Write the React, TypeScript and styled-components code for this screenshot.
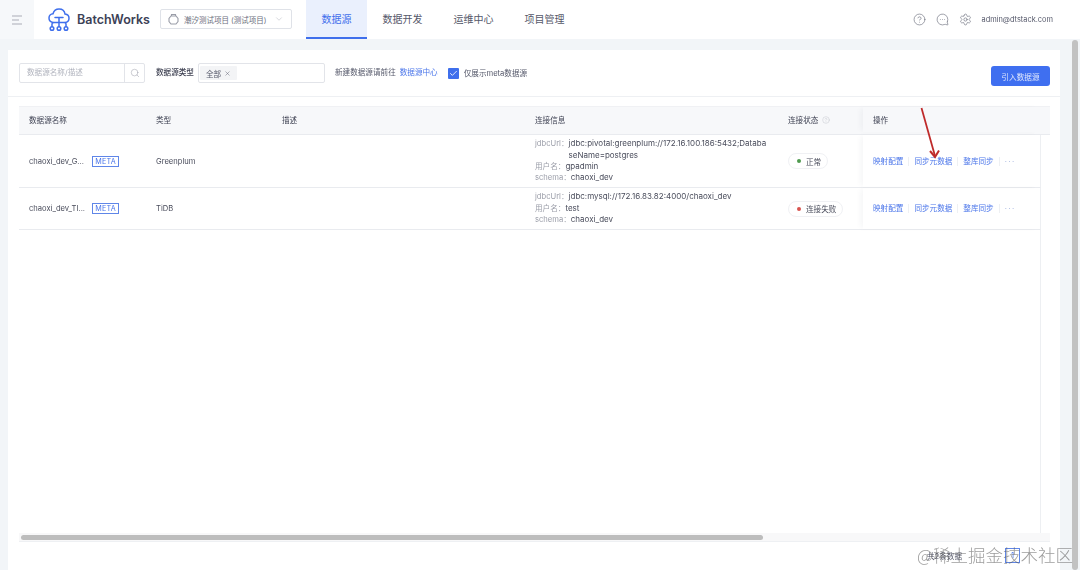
import { createGlobalStyle, styled } from 'styled-components'
import { ChevronDown, Search, Check, X, CircleHelp, MessageCircleMore, Settings } from 'lucide-react'

const GlobalStyle = createGlobalStyle`
  html, body {
    margin: 0;
    padding: 0;
    width: 1080px;
    height: 570px;
    overflow: hidden;
    background: #f2f5f8;
    font-family: Inter, "Noto Sans CJK SC", sans-serif;
    font-size: 7.6px;
    color: #4a4d5c;
  }
  * { box-sizing: border-box; }
`

const Page = styled.div`
  position: relative;
  width: 1080px;
  height: 570px;
  display: flex;
  flex-direction: column;
  filter: blur(0.35px);
`

const Header = styled.header`
  height: 39px;
  flex: none;
  display: flex;
  align-items: stretch;
  background: #fff;
`

const Collapse = styled.div`
  width: 34px;
  display: flex;
  align-items: center;
  justify-content: center;
  background: #f6f8fa;
`

const Brand = styled.div`
  display: flex;
  align-items: center;
  gap: 7px;
  margin-left: 14px;
  width: 112px;
  font-size: 12.5px;
  font-weight: 600;
  color: #3c4156;
`

const ProjectSelect = styled.div`
  width: 132px;
  height: 20px;
  margin-top: 9px;
  padding: 0 7px;
  display: flex;
  align-items: center;
  gap: 5px;
  border: 1px solid #dfe2e8;
  border-radius: 2px;
  font-size: 7.5px;
  color: #6b6e7c;
  & > span { flex: 1; white-space: nowrap; }
`

const Nav = styled.nav`
  display: flex;
  margin-left: 14px;
  flex: 1;
`

const NavItem = styled.div<{ $active?: boolean }>`
  width: ${p => (p.$active ? '61px' : '71px')};
  display: flex;
  align-items: center;
  justify-content: center;
  font-size: 10px;
  color: ${p => (p.$active ? '#3f6fec' : '#55586a')};
  background: ${p => (p.$active ? '#eaf0fd' : 'transparent')};
  border-bottom: 2px solid ${p => (p.$active ? '#3f6fec' : 'transparent')};
`

const UserArea = styled.div`
  display: flex;
  align-items: center;
  gap: 10px;
  padding-right: 27px;
  color: #6c6f7d;
`

const MessageIcon = styled(MessageCircleMore)`
  transform: scaleX(-1);
`

const UserMail = styled.span`
  font-size: 7.4px;
  color: #55586a;
`

const Card = styled.main`
  flex: 1;
  margin: 11px 20px 0 8px;
  background: #fff;
  display: flex;
  flex-direction: column;
  min-height: 0;
`

const FilterBar = styled.div`
  height: 47px;
  flex: none;
  padding: 13px 10px 0 11px;
  display: flex;
  align-items: flex-start;
  border-bottom: 1px solid #eef0f3;
`

const SearchBox = styled.div`
  width: 126px;
  height: 20px;
  display: flex;
  border: 1px solid #e2e4e9;
  border-radius: 2px;
  color: #b0b3bd;
  & > span { flex: 1; padding-left: 7px; line-height: 18px; white-space: nowrap; }
`

const SearchIcon = styled.div`
  width: 20px;
  display: flex;
  align-items: center;
  justify-content: center;
  border-left: 1px solid #e2e4e9;
  color: #9a9da8;
`

const FilterLabel = styled.span`
  margin-left: 11px;
  width: 42px;
  line-height: 20px;
  font-weight: 500;
  color: #3e4152;
  white-space: nowrap;
`

const TypeSelect = styled.div`
  width: 127px;
  height: 20px;
  padding: 2px 1px;
  border: 1px solid #e2e4e9;
  border-radius: 2px;
`

const TypeTag = styled.span`
  height: 14px;
  width: 37px;
  display: flex;
  align-items: center;
  justify-content: center;
  gap: 3px;
  background: #f3f4f6;
  border-radius: 1px;
  color: #55586a;
`

const Hint = styled.span`
  margin-left: 10px;
  line-height: 20px;
  color: #55586a;
  white-space: nowrap;
`

const BlueLink = styled.a`
  color: #4a75ea;
  white-space: nowrap;
`

const HintLink = styled(BlueLink)`
  margin-left: 4px;
  line-height: 20px;
`

const CheckItem = styled.label`
  margin: 5px 0 0 10px;
  display: flex;
  align-items: center;
  gap: 5px;
  color: #55586a;
  white-space: nowrap;
  line-height: 11px;
`

const CheckMark = styled.span`
  width: 11px;
  height: 11px;
  display: flex;
  align-items: center;
  justify-content: center;
  background: #3f6fec;
  border-radius: 1px;
  color: #fff;
`

const ImportButton = styled.button`
  margin: 3px 0 0 auto;
  width: 59px;
  height: 20px;
  padding: 0;
  border: 0;
  border-radius: 3px;
  background: #3f6ff0;
  color: #dfe7fd;
  font: inherit;
`

const TableWrap = styled.section`
  flex: 1;
  margin: 9px 10px 0 11px;
  min-height: 0;
  display: flex;
  flex-direction: column;
`

const TableBody = styled.div`
  flex: 1;
  min-height: 0;
  display: flex;
  flex-direction: column;
`

const columns = '127px 126px 253px 253px 85px 177px'

const HeadRow = styled.div`
  height: 29px;
  flex: none;
  padding-bottom: 2px;
  display: grid;
  grid-template-columns: ${columns};
  align-items: center;
  background: #f7f8fa;
  border-top: 1px solid #f0f1f4;
  border-bottom: 1px solid #e9ebef;
  color: #3e4152;
`

const Row = styled.div<{ $height: number }>`
  height: ${p => p.$height}px;
  width: 1022px;
  flex: none;
  display: grid;
  grid-template-columns: ${columns};
  align-items: center;
  border-bottom: 1px solid #e9ebef;
  border-right: 1px solid #edeff2;
`

const Cell = styled.div`
  padding-left: 10px;
  display: flex;
  align-items: center;
  white-space: nowrap;
`

const HeadHelp = styled(CircleHelp)`
  margin-left: 4px;
  color: #b0b3bd;
`

const FixedCell = styled(Cell)`
  height: 100%;
  box-shadow: -4px 0 6px -2px rgba(40, 50, 80, 0.05);
`

const NameText = styled.span`
  width: 63px;
  overflow: hidden;
`

const MetaTag = styled.span`
  width: 27px;
  height: 11px;
  display: flex;
  align-items: center;
  justify-content: center;
  border: 1px solid #5f86e8;
  color: #4a75ea;
  font-size: 7.2px;
  letter-spacing: 0.2px;
`

const Connection = styled.div`
  padding-left: 10px;
  font-size: 8px;
  line-height: 11.4px;
`

const ConnLine = styled.div`
  display: flex;
  white-space: nowrap;
`

const ConnKey = styled.span`
  font-size: 7.6px;
  color: #9a9da8;
`

const ConnValue = styled.span`
  color: #4a4d5c;
  white-space: pre-line;
`

const StatusPill = styled.span`
  height: 16px;
  padding: 0 6px 0 8px;
  display: inline-flex;
  align-items: center;
  gap: 5px;
  border: 1px solid #f0f1f4;
  border-radius: 8px;
`

const Dot = styled.i<{ $color: string }>`
  width: 4px;
  height: 4px;
  border-radius: 50%;
  background: ${p => p.$color};
`

const Action = styled(BlueLink)`
  padding-right: 5px;
  margin-right: 5px;
  border-right: 1px solid #eef0f3;
  line-height: 9px;
`

const More = styled.span`
  color: #8fa3d8;
  letter-spacing: 1.5px;
  line-height: 9px;
`

const Filler = styled.div`
  flex: 1;
  width: 1022px;
  border-right: 1px solid #edeff2;
`

const HScrollTrack = styled.div`
  height: 9px;
  flex: none;
  padding: 2px;
  background: #f8f8f9;
  border-bottom: 1px solid #eef0f3;
`

const HScrollThumb = styled.div`
  width: 742px;
  height: 5px;
  border-radius: 3px;
  background: #bdbdbd;
`

const Footer = styled.div`
  height: 28px;
  flex: none;
  display: flex;
  justify-content: flex-end;
  align-items: center;
  padding: 0 30px 2px 0;
  gap: 43px;
  color: #55586a;
`

const PageBox = styled.span`
  width: 15px;
  height: 15px;
  display: flex;
  align-items: center;
  justify-content: center;
  border: 1px solid #5f86e8;
  color: #4a75ea;
`

const PageScrollbar = styled.div`
  position: absolute;
  top: 40px;
  right: 2px;
  width: 6px;
  height: 530px;
  border-radius: 3px;
  background: #c2c2c2;
`

const Watermark = styled.div`
  position: absolute;
  right: 7px;
  bottom: 5px;
  font-family: "Noto Sans CJK SC", sans-serif;
  font-size: 17.5px;
  font-weight: 300;
  line-height: 20px;
  color: rgba(90, 90, 90, 0.6);
  white-space: nowrap;
`

const Arrow = styled.svg`
  position: absolute;
  left: 916px;
  top: 105px;
`

function Logo() {
  return (
    <svg width="22" height="24" viewBox="0 0 22 24" fill="none" stroke="#3f6fec" strokeWidth="1.5" strokeLinecap="round">
      <path d="M5 14.500C2.500 14 1 12.200 1 10c0-2.400 1.800-4.200 4-4.300C5.800 3 8 1 11 1c3.200 0 5.600 2.200 6 5 2.300.3 4 2 4 4.200 0 2.300-1.700 4-4 4.300" />
      <path d="M7 9.500h8M11 9.500v9M11 14.500H5.500c-.8 0-1.500.7-1.500 1.500v2.500M11 14.500h5.500c.8 0 1.500.7 1.500 1.500v2.500" />
      <circle cx="4" cy="20.500" r="1.800" />
      <circle cx="11" cy="20.500" r="1.800" />
      <circle cx="18" cy="20.500" r="1.800" />
    </svg>
  )
}

function MenuIcon() {
  return (
    <svg width="12" height="10" viewBox="0 0 12 10" fill="none" stroke="#a9acb5" strokeWidth="1.200">
      <path d="M1 1h10M1 5h7M1 9h10" />
    </svg>
  )
}

function ProjectIcon() {
  return (
    <svg width="11" height="12" viewBox="0 0 11 12" fill="none" stroke="#9a9da8" strokeWidth="1.100">
      <path d="M3.500 3V1.500h4V3" />
      <path d="M3 3h5l2 2.500v3L8 11H3L1 8.500v-3z" />
    </svg>
  )
}

function Connect(props: { url: string; user: string }) {
  return (
    <Connection>
      <ConnLine>
        <ConnKey>jdbcUrl：</ConnKey>
        <ConnValue>{props.url}</ConnValue>
      </ConnLine>
      <ConnLine>
        <ConnKey>用户名：</ConnKey>
        <ConnValue>{props.user}</ConnValue>
      </ConnLine>
      <ConnLine>
        <ConnKey>schema：</ConnKey>
        <ConnValue>chaoxi_dev</ConnValue>
      </ConnLine>
    </Connection>
  )
}

function Actions() {
  return (
    <>
      <Action>映射配置</Action>
      <Action>同步元数据</Action>
      <Action>整库同步</Action>
      <More>···</More>
    </>
  )
}

export default function App() {
  return (
    <Page>
      <GlobalStyle />
      <Header>
        <Collapse>
          <MenuIcon />
        </Collapse>
        <Brand>
          <Logo />
          BatchWorks
        </Brand>
        <ProjectSelect>
          <ProjectIcon />
          <span>潮汐测试项目 (测试项目)</span>
          <ChevronDown size={10} strokeWidth={1.2} color="#b0b3bd" />
        </ProjectSelect>
        <Nav>
          <NavItem $active>数据源</NavItem>
          <NavItem>数据开发</NavItem>
          <NavItem>运维中心</NavItem>
          <NavItem>项目管理</NavItem>
        </Nav>
        <UserArea>
          <CircleHelp size={13} strokeWidth={1.2} />
          <MessageIcon size={13} strokeWidth={1.2} />
          <Settings size={13} strokeWidth={1.2} />
          <UserMail>admin@dtstack.com</UserMail>
        </UserArea>
      </Header>
      <Card>
        <FilterBar>
          <SearchBox>
            <span>数据源名称/描述</span>
            <SearchIcon>
              <Search size={10} strokeWidth={1.2} />
            </SearchIcon>
          </SearchBox>
          <FilterLabel>数据源类型</FilterLabel>
          <TypeSelect>
            <TypeTag>
              全部
              <X size={7} strokeWidth={1.5} />
            </TypeTag>
          </TypeSelect>
          <Hint>新建数据源请前往</Hint>
          <HintLink>数据源中心</HintLink>
          <CheckItem>
            <CheckMark>
              <Check size={9} strokeWidth={2.2} />
            </CheckMark>
            仅展示meta数据源
          </CheckItem>
          <ImportButton>引入数据源</ImportButton>
        </FilterBar>
        <TableWrap>
          <TableBody>
            <HeadRow>
              <Cell>数据源名称</Cell>
              <Cell>类型</Cell>
              <Cell>描述</Cell>
              <Cell>连接信息</Cell>
              <Cell>
                连接状态
                <HeadHelp size={8} strokeWidth={1} />
              </Cell>
              <FixedCell>操作</FixedCell>
            </HeadRow>
            <Row $height={53}>
              <Cell>
                <NameText>chaoxi_dev_G...</NameText>
                <MetaTag>META</MetaTag>
              </Cell>
              <Cell>Greenplum</Cell>
              <Cell />
              <Connect url={'jdbc:pivotal:greenplum://172.16.100.186:5432;Databa\nseName=postgres'} user="gpadmin" />
              <Cell>
                <StatusPill>
                  <Dot $color="#4f9a4f" />
                  正常
                </StatusPill>
              </Cell>
              <FixedCell>
                <Actions />
              </FixedCell>
            </Row>
            <Row $height={42}>
              <Cell>
                <NameText>chaoxi_dev_TI...</NameText>
                <MetaTag>META</MetaTag>
              </Cell>
              <Cell>TiDB</Cell>
              <Cell />
              <Connect url="jdbc:mysql://172.16.83.82:4000/chaoxi_dev" user="test" />
              <Cell>
                <StatusPill>
                  <Dot $color="#d9534f" />
                  连接失败
                </StatusPill>
              </Cell>
              <FixedCell>
                <Actions />
              </FixedCell>
            </Row>
            <Filler />
            <HScrollTrack>
              <HScrollThumb />
            </HScrollTrack>
          </TableBody>
          <Footer>
            <span>共2条数据</span>
            <PageBox>1</PageBox>
          </Footer>
        </TableWrap>
      </Card>
      <PageScrollbar />
      <Arrow width="26" height="56" viewBox="0 0 26 56" fill="none" stroke="#bf2a2a" strokeWidth="1.800">
        <path d="M5.500 3 19 51" />
        <path d="M14 46l5 6 4-6.500" strokeWidth="2" />
      </Arrow>
      <Watermark>@稀土掘金技术社区</Watermark>
    </Page>
  )
}
